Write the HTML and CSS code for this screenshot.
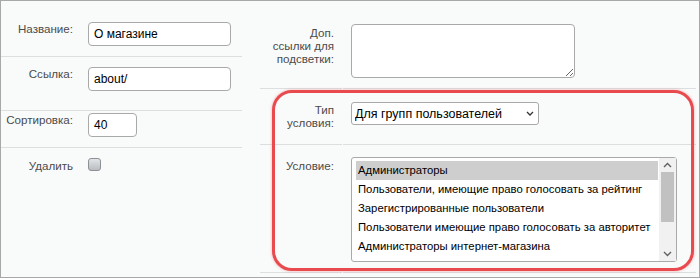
FILE: index.html
```html
<!DOCTYPE html>
<html>
<head>
  <meta charset="UTF-8">
  <title>Пункт меню</title>
  <link rel="stylesheet" href="styles.css">
</head>
<body>

  <div class="frame">
    <div class="col col-left">
      <div class="row row-name">
        <label class="lbl" for="name">Название:</label>
        <div class="fld"><input type="text" id="name" class="txt" value="О магазине"></div>
      </div>
      <div class="row row-link">
        <label class="lbl" for="link">Ссылка:</label>
        <div class="fld"><input type="text" id="link" class="txt" value="about/"></div>
      </div>
      <div class="row row-sort">
        <label class="lbl" for="sort">Сортировка:</label>
        <div class="fld"><input type="text" id="sort" class="txt txt-short" value="40"></div>
      </div>
      <div class="row row-del">
        <label class="lbl" for="del">Удалить</label>
        <div class="fld"><span class="check" id="del"></span></div>
      </div>
    </div>

    <div class="col col-right">
      <div class="row row-extra">
        <label class="lbl" for="extra">Доп.<br>ссылки для<br>подсветки:</label>
        <div class="fld"><textarea id="extra" class="area"></textarea></div>
      </div>
      <div class="row row-type">
        <label class="lbl" for="ctype">Тип<br>условия:</label>
        <div class="fld">
          <div class="sel-wrap">
            <select id="ctype" class="sel">
              <option selected>Для групп пользователей</option>
            </select>
            <svg class="sel-arrow" width="8" height="5" viewBox="0 0 8 5"><path d="M1 1 L4 4 L7 1" fill="none" stroke="#333" stroke-width="1.3"/></svg>
          </div>
        </div>
      </div>
      <div class="row row-cond">
        <label class="lbl">Условие:</label>
        <div class="fld">
          <div class="listbox">
            <div class="options">
              <div class="opt opt-on">Администраторы</div>
              <div class="opt">Пользователи, имеющие право голосовать за рейтинг</div>
              <div class="opt">Зарегистрированные пользователи</div>
              <div class="opt">Пользователи имеющие право голосовать за авторитет</div>
              <div class="opt">Администраторы интернет-магазина</div>
            </div>
            <div class="sbar">
              <span class="sb-btn">
                <svg width="9" height="6" viewBox="0 0 9 6"><path d="M1 5 L4.5 1.5 L8 5" fill="none" stroke="#606060" stroke-width="1.4"/></svg>
              </span>
              <span class="sb-thumb"></span>
              <span class="sb-track"></span>
              <span class="sb-btn">
                <svg width="9" height="6" viewBox="0 0 9 6"><path d="M1 1 L4.5 4.5 L8 1" fill="none" stroke="#606060" stroke-width="1.4"/></svg>
              </span>
            </div>
          </div>
        </div>
      </div>
    </div>

    <!-- highlight drawn over the condition fields -->
    <div class="mark"></div>
  </div>

</body>
</html>
```

FILE: styles.css
```css
body {
  margin: 0;
  font-family: "Liberation Sans", Arial, sans-serif;
  font-size: 11.6px;
  color: #4b4b4b;
}
.frame {
  position: relative;
  width: 698px;
  height: 276px;
  border: 1px solid #a8a8a8;
  background: #f9fafa;
  display: flex;
}
.col-left {
  width: 241px;
}
.col-right {
  width: 436px;
  margin-left: 18px;
}
.row {
  display: grid;
}
.col-left .row {
  grid-template-columns: 80px 1fr;
  border-bottom: 1px solid #dcdfdf;
}
.col-left .row-del {
  border-bottom: none;
}
.col-right .row {
  grid-template-columns: 82px 1fr;
  column-gap: 1px;
}
.col-right .row > * {
  border-bottom: 1px solid #dcdfdf;
}
.lbl {
  display: block;
  text-align: right;
  line-height: 14px;
}
.col-left .lbl {
  padding-right: 8px;
}
.col-left .fld {
  padding-left: 7px;
}
.col-right .lbl {
  padding-right: 8px;
  line-height: 13px;
}
.col-right .fld {
  padding-left: 8px;
}

/* row paddings */
.row-name > * { padding-top: 21px; padding-bottom: 10px; }
.row-link > * { padding-top: 10px; padding-bottom: 19px; }
.row-sort > * { padding-top: 2px; padding-bottom: 10px; }
.row-del > * { padding-top: 10px; }
.row-del .lbl { padding-top: 11px; }
.row-extra > * { padding-top: 23px; padding-bottom: 10px; }
.row-extra .lbl { padding-top: 25px; }
.row-type > * { padding-top: 13px; padding-bottom: 15px; }
.row-type .lbl { padding-top: 14px; }
.row-cond > * { padding-top: 12px; padding-bottom: 10px; }
.row-cond .lbl { padding-top: 14px; }

.txt {
  display: block;
  width: 143px;
  height: 24px;
  box-sizing: border-box;
  border: 1px solid #a9a9a9;
  border-radius: 4px;
  padding: 0 5px;
  background: #fff;
  font-family: "Liberation Sans", Arial, sans-serif;
  font-size: 12px;
  color: #000;
}
.txt-short {
  width: 49px;
}
.check {
  display: block;
  width: 13px;
  height: 13px;
  box-sizing: border-box;
  border: 1px solid #8d9196;
  border-radius: 3px;
  background: linear-gradient(#e2e4e6, #b9bdc1);
}
.area {
  display: block;
  width: 224px;
  height: 54px;
  box-sizing: border-box;
  border: 1px solid #a9a9a9;
  border-radius: 4px;
  background: #fff;
  margin: 0;
}
.sel-wrap {
  position: relative;
  width: 188px;
}
.sel {
  display: block;
  width: 188px;
  height: 23px;
  box-sizing: border-box;
  appearance: none;
  border: 1px solid #a9a9a9;
  border-radius: 3px;
  background: #fff;
  padding: 0 3px;
  font-family: "Liberation Sans", Arial, sans-serif;
  font-size: 12.5px;
  color: #000;
}
.sel-arrow {
  position: absolute;
  right: 5px;
  top: 9px;
  pointer-events: none;
}
.listbox {
  display: flex;
  width: 326px;
  height: 105px;
  box-sizing: border-box;
  border: 1px solid #a9a9a9;
  border-radius: 3px;
  background: #fff;
}
.options {
  flex: 1;
  padding: 3px 1px 0 4px;
}
.opt {
  height: 19px;
  line-height: 19px;
  padding-left: 2px;
  color: #000;
  font-size: 11.3px;
  white-space: nowrap;
}
.opt-on {
  background: #cecece;
}
.sbar {
  width: 17px;
  display: flex;
  flex-direction: column;
  background: #f1f1f1;
}
.sb-btn {
  height: 14px;
  display: flex;
  align-items: center;
  justify-content: center;
}
.sb-thumb {
  height: 50px;
  margin: 0 2px;
  background: #c1c1c1;
}
.sb-track {
  flex: 1;
}
.mark {
  position: absolute;
  left: 271px;
  top: 89px;
  width: 422px;
  height: 181px;
  box-sizing: border-box;
  border: 3px solid #e84a4e;
  border-radius: 20px;
  box-shadow: 0 0 3px rgba(232, 74, 78, 0.45);
}
```
